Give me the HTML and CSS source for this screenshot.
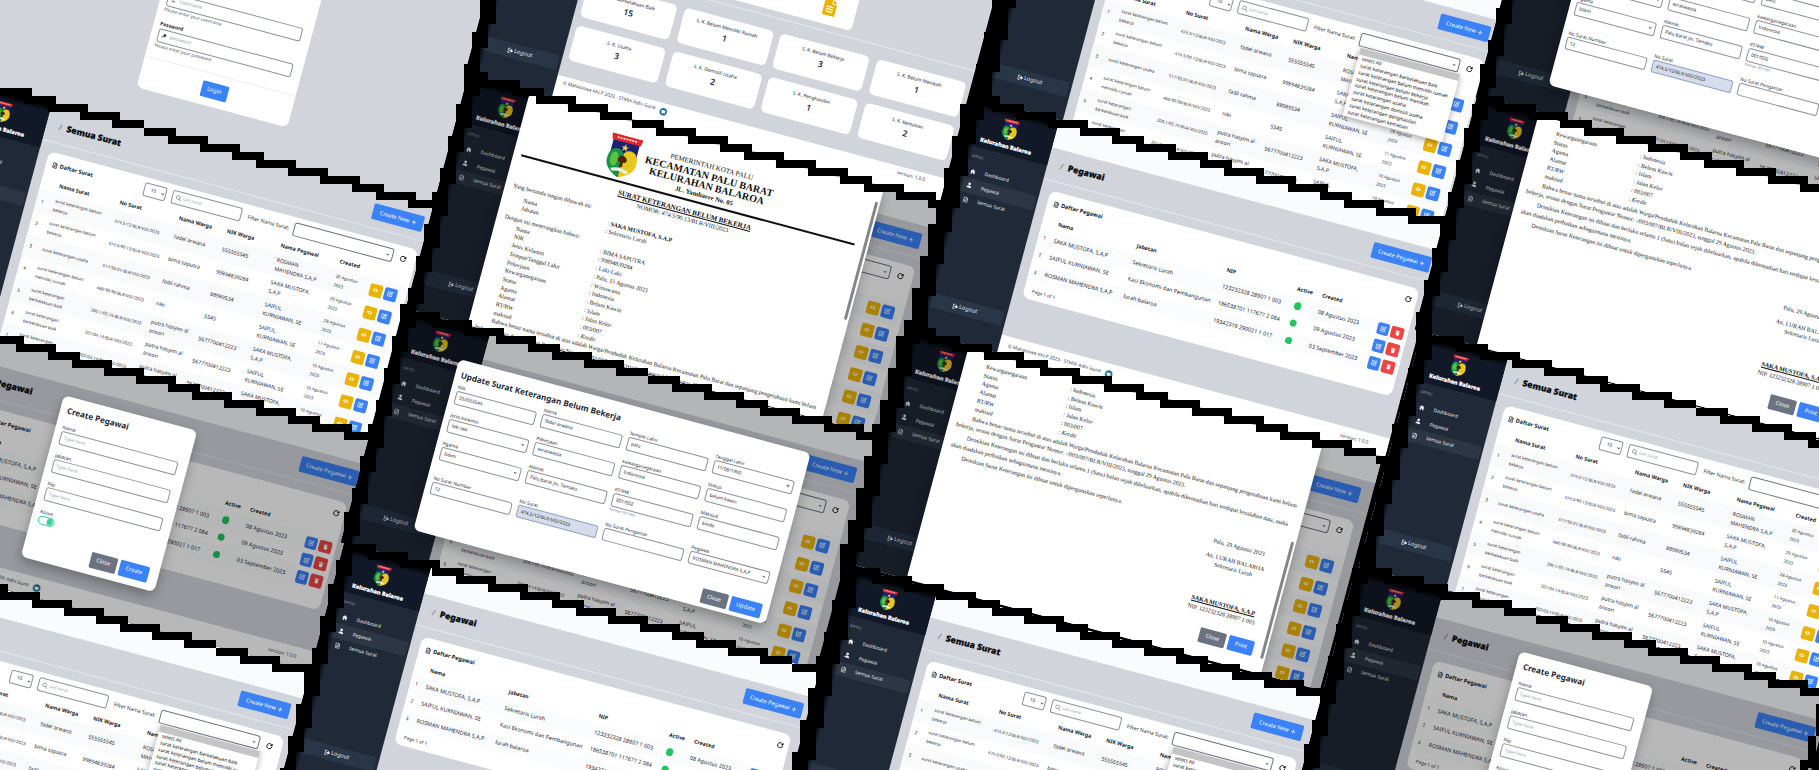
FILE: index.html
```html
<!DOCTYPE html>
<html lang="id">
<head>
<meta charset="utf-8">
<title>Kelurahan Balaroa</title>
<link rel="stylesheet" href="styles.css">
</head>
<body>
<main class="wall" id="wall"></main>
<script src="app.js"></script>
</body>
</html>
```

FILE: styles.css
```css
* { box-sizing: border-box; }
body { margin: 0; background: #000; overflow: hidden; font-family: "Noto Sans", "Open Sans", sans-serif; color: #1f2937; }
.wall { position: relative; width: 1819px; height: 770px; overflow: hidden; background: #000; }
.tile { position: absolute; width: 492px; height: 242px; overflow: hidden; display: flex; transform-origin: 0 0; transform: rotate(15deg) translate(-46px, -22px); background: #d1d5db; font-size: 5px; line-height: 1.2; white-space: nowrap; }
.cells { position: absolute; left: 0; top: 0; width: 1819px; height: 770px; }
svg { display: block; flex: none; }

/* sidebar */
.side { position: relative; flex: none; width: 90px; height: 242px; background: #1f2937; color: #e6e9ed; display: flex; flex-direction: column; }
.side::after { content: ""; position: absolute; inset: 0; background: linear-gradient(90deg, #000 7px, transparent 14px), linear-gradient(180deg, #000 4px, transparent 11px); }
.brand { height: 47px; background: #111827; display: flex; flex-direction: column; align-items: center; padding-top: 12px; }
.brand .emblem { width: 16px; height: 21px; }
.brand b { font-size: 5.5px; font-weight: 900; color: #fff; -webkit-text-stroke: .2px #fff; margin-top: 3px; }
.menu-label { font-size: 4px; color: #8b94a1; padding: 8px 0 0 15px; height: 18px; }
.item { height: 14.3px; margin-right: 2px; padding-left: 17px; display: flex; align-items: center; gap: 9px; font-size: 4.8px; }
.item svg { width: 6px; height: 6px; }
.item.on { background: #2c3644; border-radius: 0 2px 2px 0; }
.logout { position: relative; margin-top: auto; margin-bottom: 28px; margin-right: 3px; height: 15px; background: #283647; display: flex; align-items: center; justify-content: center; gap: 1px; padding-left: 8px; font-size: 5.6px; border-radius: 0 2px 2px 0; }
.logout svg { width: 6px; height: 6px; }

/* page */
.main { flex: 1; height: 242px; display: flex; flex-direction: column; overflow: hidden; }
.topbar { flex: none; height: 28px; background: #fafbfc; }
.scrolled .topbar { height: 6px; background: #d1d5db; }
.head { flex: none; height: 33px; border-bottom: .6px solid #e4e7eb; display: flex; align-items: center; padding: 0 12px 0 13px; }
.head i { font-style: normal; font-size: 8px; color: #6b7280; width: 8px; }
.head b { flex: 1; font-size: 8.6px; font-weight: 900; color: #0b0d12; -webkit-text-stroke: .25px #0b0d12; }
.btn { display: inline-flex; align-items: center; justify-content: center; gap: 2px; height: 15.5px; padding: 0 6.5px; border-radius: 1.5px; background: #3b82f6; color: #fff; font-size: 5.6px; }
.btn.gray { background: #6b7280; }
.head .btn svg { width: 5px; height: 5px; }
.head .btn { width: 60px; padding: 0; margin-right: -6px; }
.head .btn.new { width: 52px; margin-right: 0; }
.card { flex: none; width: 382px; margin: 9px 0 0 10px; background: #fff; border-radius: 7px; }
.surat { height: 260px; }
.pegawai { height: 111px; }
.tools { display: flex; align-items: center; height: 24px; padding-left: 6px; }
.cardtitle { display: flex; align-items: center; gap: 2px; width: 95px; font-weight: 700; font-size: 5.6px; color: #111827; }
.cardtitle svg { width: 6px; height: 7px; }
.pegawai .cardtitle { flex: 1; }
.box { height: 14px; border: .6px solid #8b919b; border-radius: 2.5px; display: flex; align-items: center; justify-content: space-between; padding: 0 3px; font-size: 4.6px; background: #fff; }
.box svg { width: 3px; height: 3px; }
.len { width: 22.5px; padding-left: 6px; padding-right: 1px; }
.find { width: 72px; margin: 0 7px 0 6px; color: #9ca3af; justify-content: flex-start; gap: 2px; font-size: 4.4px; }
.find svg { width: 6px; height: 6px; }
.tools .lbl { width: 47px; font-size: 5.1px; }
.filter { width: 103px; border-color: #6b7280; }
.reload { width: 7px; height: 7px; margin-left: 7px; }
.pegawai .reload { margin-right: 5px; }
.row { display: grid; align-items: center; padding-left: 5px; }
.surat .row { height: 23px; grid-template-columns: 13.5px 62.5px 61.5px 49.7px 55.5px 61.3px 36px 31px; font-size: 5.3px; line-height: 8.8px; }
.surat .row:nth-child(odd) { background: #f9fafb; }
.surat .row.th, .pegawai .row.th { height: 15px; font-weight: 700; font-size: 5.3px; color: #111827; background: #fff; }
.sm { font-size: 4.25px; }
.n { font-size: 4.6px; }
.acts { display: flex; gap: 2.2px; }
.sq { width: 12.8px; height: 12.8px; border-radius: 2px; display: flex; align-items: center; justify-content: center; background: #3b82f6; }
.sq svg { width: 6px; height: 6px; }
.sq.y { background: #eab308; }
.sq.r { background: #ef4444; }
.pegawai .row { height: 17.8px; grid-template-columns: 11px 81.5px 93px 73px 26px 61px 31px; font-size: 5.5px; }
.pegawai .row:nth-child(odd) { background: #fbfcfd; }
.dot { width: 7.4px; height: 7.4px; border-radius: 50%; background: #22c55e; margin-left: 1px; }
.pages { padding: 8px 0 0 8px; font-size: 4.6px; }
.foot { flex: none; margin-top: auto; height: 20px; background: #fff; display: flex; align-items: center; gap: 4px; padding: 0 20px 0 9px; font-size: 4.7px; color: #374151; }
.foot .round { width: 9px; height: 9px; }
.foot span:last-child { margin-left: auto; }

/* dashboard */
.dash .foot { height: 24px; align-items: flex-start; padding-top: 4px; padding-left: 7px; }
.summary { width: 131px; height: 60px; margin: 40px 0 0 141px; background: #fff; border-radius: 5px; display: flex; justify-content: flex-end; align-items: flex-end; padding: 0 20px 9px; }
.summary svg { width: 13px; height: 17px; }
.rule { height: .6px; background: #e6e9ec; margin: 6px 0 13px; }
.stats { display: grid; grid-template-columns: repeat(4, 92px); gap: 8.5px 7.5px; margin-left: 6px; }
.stat { height: 36.5px; background: #fff; border-radius: 5px; display: flex; flex-direction: column; align-items: center; padding-top: 7.5px; font-size: 4.8px; }
.stat strong { font-size: 8.6px; font-weight: 600; line-height: 13px; margin-top: 1px; }

/* login */
.login-card { margin-left: 167px; width: 156px; height: 205px; background: #fff; border-radius: 0 0 6px 6px; display: flex; flex-direction: column; justify-content: flex-end; padding: 0 10.5px 8.5px 6.5px; }
.login-card b { font-size: 5px; margin: 8px 0 2px; }
.login-card .box { height: 14px; justify-content: flex-start; gap: 4px; color: #9ca3af; font-size: 4.8px; }
.login-card .box svg { width: 5px; height: 5px; }
.login-card small { font-size: 4.5px; margin-top: 1px; height: 6px; color: #4b5563; }
.login-card hr { width: 150px; margin: 9px 0 9px -3px; border: 0; height: .5px; background: #eceef0; flex: none; }
.login-card .btn { align-self: center; width: 27px; height: 15.5px; padding: 0; }

/* dropdown menu */
.menu { position: absolute; left: 359px; top: 90px; width: 103px; height: 70px; background: #fff; box-shadow: 0 2px 7px rgba(0,0,0,.35); font-size: 4.9px; line-height: 6.9px; color: #111; }
.menu div { padding-left: 4px; height: 6.9px; }
.menu div:first-child { background: #c4c4c4; }

/* modals */
.shade { position: absolute; inset: 0; background: rgba(0,0,0,.28); }
.modal { position: absolute; background: #fff; border-radius: 6px; box-shadow: 0 5px 12px rgba(0,0,0,.28); }
.modal h3 { margin: 0; font-size: 8.2px; line-height: 12px; font-weight: 700; }
.create { left: 180px; top: 39px; width: 138px; height: 167px; padding: 8px 10px 0 7px; display: flex; flex-direction: column; }
.field { display: flex; flex-direction: column; height: 29px; font-size: 4.7px; line-height: 7px; }
.field .box { height: 13.5px; font-size: 4.7px; flex: none; }
.create .field { padding-top: 7px; }
.create .field .box { color: #9ca3af; }
.create h3 { height: 13px; margin-bottom: 0; }
.toggle { width: 17px; height: 8.5px; border: .6px solid #36d399; border-radius: 5px; display: flex; justify-content: flex-end; align-items: center; padding: 1px; }
.toggle::after { content: ""; width: 6.5px; height: 6.5px; border-radius: 50%; background: #36d399; }
.btns { display: flex; justify-content: flex-end; gap: 3px; }
.create .btns { margin-top: auto; margin-bottom: 7.5px; }
.update { left: 67px; top: 34px; width: 364px; height: 177px; padding: 9px 7px 0 6px; }
.form { display: grid; grid-template-columns: repeat(4, 83px); column-gap: 6px; grid-template-rows: 29px 29px 35.5px 29px; margin-top: 3px; }
.form .field { height: auto; }
.form small { font-size: 3.6px; line-height: 6px; color: #6b7280; }
.off { background: #d5dcea !important; border-color: #8fa1c4; }
.update .btns { margin-top: 11px; }
.doc { left: 64px; top: 3px; width: 367px; height: 240px; border-radius: 4px; font-family: "Liberation Serif", "Times New Roman", serif; color: #111; padding: 0 14px 0 8px; font-size: 5.9px; line-height: 8.7px; overflow: hidden; }
.doc::after { content: ""; position: absolute; right: 2px; top: 14px; width: 2.6px; height: 122px; border-radius: 2px; background: #858585; }
.doc.down::after { top: 103px; height: 121px; }
.letter { display: flex; align-items: flex-start; height: 62px; padding: 15px 0 0 82px; border-bottom: 2.6px solid #111; }
.letter .emblem { width: 33px; height: 43px; }
.letter div { width: 144px; text-align: center; margin-top: 3.5px; font-size: 7.1px; line-height: 9.8px; }
.letter strong { display: block; font-size: 10.1px; }
.letter em { font-style: normal; font-weight: 700; font-size: 6.7px; }
.subj { text-align: center; width: 344px; padding-top: 5.5px; line-height: 8.2px; font-size: 6.1px; margin-bottom: 4px; }
.subj u { display: block; font-weight: 700; font-size: 7px; }
.kv { display: grid; grid-template-columns: 87px 1fr; padding-left: 14px; }
.gap { margin-top: 3px; }
.para { width: 344px; white-space: nowrap; text-align: justify; text-align-last: justify; line-height: 9.4px; }
.para.in { padding-left: 14px; }
.para.end { text-align-last: left; }
.sp { margin-top: 1.6px; }
.sign { width: 76px; margin-left: 267px; text-align: center; }
.sign p { margin: 0; }
.sign p:first-child { margin: 5px 0 6px; }
.sign u { display: block; font-weight: 700; font-size: 6.1px; margin-top: 28px; }
.doc .btns { font-family: "Noto Sans", sans-serif; margin-top: 13px; padding-right: 0; line-height: 1.2; }
.down { padding-top: 9px; }
```

FILE: app.js
```javascript
const svg = (vb, body, cls = '') => `<svg viewBox="0 0 ${vb} ${vb}" class="${cls}">${body}</svg>`;
const line = (d, c = 'currentColor', w = 2) => `<path d="${d}" fill="none" stroke="${c}" stroke-width="${w}" stroke-linecap="round" stroke-linejoin="round"/>`;
const ic = {
  home: svg(24, '<path fill="currentColor" d="M12 2 1 12h3v10h6v-6h4v6h6V12h3z"/>'),
  user: svg(24, '<circle cx="12" cy="7" r="5.5" fill="currentColor"/><path fill="currentColor" d="M2 23c0-6 4-9 10-9s10 3 10 9z"/>'),
  file: svg(24, line('M14 2H5v20h15V8zM14 2v6h6M9 13h7M9 17h5', 'currentColor', 2.4)),
  exit: svg(24, line('M9 3H3v18h6', 'currentColor', 3) + '<path fill="currentColor" d="M8 9h6V4l9 8-9 8v-5H8z"/>'),
  plus: svg(24, line('M12 3v18M3 12h18', '#fff', 3)),
  chev: svg(24, line('M3 7l9 9 9-9', '#111', 5)),
  find: svg(24, line('M16 16l7 7', '#6b7280', 2.5) + '<circle cx="10" cy="10" r="7.5" fill="none" stroke="#6b7280" stroke-width="2.5"/>'),
  key: svg(24, '<circle cx="15" cy="9" r="7" fill="#374151"/><path d="M11 12 2 22" stroke="#374151" stroke-width="4"/>'),
  reload: svg(24, line('M20 8a9 9 0 1 0 1 6', '#111', 3) + '<path d="M22 2v9h-9z" fill="#111"/>', 'reload'),
  eye: svg(24, '<path fill="#fff3c4" d="M1 12C5 3 19 3 23 12 19 21 5 21 1 12z"/><circle cx="12" cy="12" r="3.5" fill="#eab308"/>'),
  edit: svg(24, line('M12 4H3v17h17v-9M9 15l1-4L20 1l3 3-10 10z', '#e8f0ff', 3)),
  bin: svg(24, '<path fill="#fff" d="M3 4h6l1-2h4l1 2h6v3H3zM5 9h14l-1 14H6z"/>'),
  cal: svg(24, line('M3 5h18v17H3zM3 10h18M8 2v5M16 2v5M8 15h8', '#333', 2.5)),
  round: svg(24, '<circle cx="12" cy="12" r="11.5" fill="#9fc7dd"/><circle cx="12" cy="12" r="9" fill="#146a96"/><path fill="#fff" d="M7 8h10v8h-4l-2 2-1-2H7z"/>', 'round'),
  doc: '<svg viewBox="0 0 26 34"><path fill="#eab308" d="M3 0h13v10h10v21a3 3 0 0 1-3 3H3a3 3 0 0 1-3-3V3a3 3 0 0 1 3-3zM18 0l8 8h-8z"/><path d="M6 16h14M6 21h14M6 26h14" stroke="#fff" stroke-width="2.4"/></svg>'
};
// City coat of arms: red banner, navy field with star, green and yellow halves, tree
const emblem = `<svg class="emblem" viewBox="0 0 66 86">
<path fill="#1d2170" d="M6 10h54v30c0 20-8 32-27 44C14 72 6 60 6 40z"/>
<path fill="#159447" d="M20 28C6 28 2 42 3 56c2 14 14 22 29 29V36c-3-5-7-8-12-8z"/>
<path fill="#e8c81e" d="M46 28c14 0 18 14 17 28-2 14-14 22-30 29V36c3-5 7-8 13-8z"/>
<path fill="#5fc23d" d="M17 35c-7 3-9 13-7 21 2 7 7 10 10 8 5-5 8-26-3-29z"/>
<path fill="#4a2410" d="M24 48l4-6 6-2 6 3 3 5-2 5-5 1 1 9h-7l1-9-5-1z"/>
<path fill="#e9f2e2" d="M14 70q19-9 38 0l-5 5q-14-6-28 0z"/>
<path fill="#ffd738" d="M33 16l2 6h6l-5 3 2 6-5-4-5 4 2-6-5-3h6z"/>
<path fill="#e3262b" d="M1 0h64l-3 13H4z"/><path d="M13 6.5h40" stroke="#fff" stroke-width="3" stroke-dasharray="4 2"/></svg>`;

const side = on => `<aside class="side"><div class="brand">${emblem}<b>Kelurahan Balaroa</b></div><div class="menu-label">MENU</div>
${[['home', 'Dashboard'], ['user', 'Pegawai'], ['file', 'Semua Surat']].map(([i, t]) => `<div class="item ${on === t ? 'on' : ''}">${ic[i]}<span>${t}</span></div>`).join('')}
<div class="logout">${ic.exit}Logout</div></aside>`;
const foot = `<div class="foot"><span>© Mahasiswa KKLP 2023 - STMIK Adhi Guna</span>${ic.round}<span>version: 1.0.0</span></div>`;
const head = (t, b, c = '') => `<div class="topbar"></div><div class="head"><i>/</i><b>${t}</b><span class="btn ${c}">${b} ${ic.plus}</span></div>`;
const sel = (t, c = '') => `<div class="box ${c}"><span>${t}</span>${ic.chev}</div>`;

const bb = 'surat keterangan<br>berkelakuan baik', sk = 'SAIFUL<br>KURNIAWAN, SE', sm = 'SAKA MUSTOFA,<br>S,A,P', pu = 'putra hasyim al<br>ansori';
const letters = [
  ['surat keterangan belum<br>bekerja', '474.5/12/BLR/VIII/2023', 'fadel arwana', '555555545', 'ROSMAN<br>MAHENDRA S,A,P', '30'],
  ['surat keterangan belum<br>bekerja', '474.5/90.13/BLR/VIII/2023', 'bima saputra', '99894839284', sm, '29'],
  ['surat keterangan usaha', '517/93.01/BLR/VIII/2023', 'fadil rahma', '88989534', sk, '28'],
  ['surat keterangan belum<br>memiliki rumah', '460/90.90/BLR/VIII/2023', 'niki', '5545', sk, '11'],
  [bb, '200.1/05.74/BLR/VIII/2023', pu, '5677700412223', sm, '10'],
  [bb, '201/04.14/BLR/VIII/2023', pu, '5677700412223', sk, '10'],
  [bb, '202/03.14/BLR/VIII/2023', pu, '5677700412223', sm, '10']
];
const surat = () => side('Semua Surat') + `<section class="main">${head('Semua Surat', 'Create New', 'new')}
<div class="card surat"><div class="tools"><span class="cardtitle">${ic.file}Daftar Surat</span>${sel('10', 'len')}<div class="box find">${ic.find}cari surat</div><span class="lbl">Filter Nama Surat:</span>${sel('', 'filter')}${ic.reload}</div>
<div class="row th"><span></span><span>Nama Surat</span><span>No Surat</span><span>Nama Warga</span><span>NIK Warga</span><span>Nama Pegawai</span><span>Created</span></div>
${letters.map((r, i) => `<div class="row"><span class="n">${i + 1}</span><span class="sm">${r[0]}</span><span class="sm">${r[1]}</span><span>${r[2]}</span><span>${r[3]}</span><span>${r[4]}</span><span class="sm">${r[5]} Agustus<br>2023</span><span class="acts"><i class="sq y">${ic.eye}</i><i class="sq">${ic.edit}</i></span></div>`).join('')}
</div></section>`;

const staff = [
  ['SAKA MUSTOFA, S,A,P', 'Sekretaris Lurah', '123232328 28907 1 003', '08 Agustus 2023'],
  ['SAIFUL KURNIAWAN, SE', 'Kasi Ekonomi dan Pembangunan', '186538701 117677 2 084', '09 Agustus 2023'],
  ['ROSMAN MAHENDRA S,A,P', 'lurah balaroa', '19342319 290021 1 017', '03 September 2023']
];
const pegawai = () => side('Pegawai') + `<section class="main">${head('Pegawai', 'Create Pegawai')}
<div class="card pegawai"><div class="tools"><span class="cardtitle">${ic.file}Daftar Pegawai</span>${ic.reload}</div>
<div class="row th"><span></span><span>Nama</span><span>Jabatan</span><span>NIP</span><span>Active</span><span>Created</span></div>
${staff.map((r, i) => `<div class="row"><span class="n">${i + 1}</span><span>${r[0]}</span><span>${r[1]}</span><span>${r[2]}</span><i class="dot"></i><span>${r[3]}</span><span class="acts"><i class="sq">${ic.edit}</i><i class="sq r">${ic.bin}</i></span></div>`).join('')}
<div class="pages">Page 1 of 1</div></div>${foot}</section>`;

const kinds = ['', 'select All', ...['berkelakuan baik', 'belum memiliki rumah', 'belum bekerja', 'belum menikah', 'usaha', 'domisili usaha', 'penghasilan', 'kematian'].map(k => 'surat keterangan ' + k)];
const dropdown = () => surat() + `<div class="menu">${kinds.map(k => `<div>${k}</div>`).join('')}</div>`;

const dashboard = () => side('') + `<section class="main dash"><div class="summary">${ic.doc}</div><div class="rule"></div><div class="stats">
${[['S. K. Berkelakuan Baik', 15], ['S. K. Belum Memiliki Rumah', 1], ['S. K. Belum Bekerja', 3], ['S. K. Belum Menikah', 1], ['S. K. Usaha', 3], ['S. K. Domisili Usaha', 2], ['S. K. Penghasilan', 1], ['S. K. Kematian', 2]].map(s => `<div class="stat">${s[0]}<strong>${s[1]}</strong></div>`).join('')}
</div>${foot}</section>`;

const login = () => `<div class="login-card"><div class="box">${ic.user}Username</div><small>Please enter your username</small><b>Password</b><div class="box">${ic.key}password</div><small>Please enter your password</small><hr><span class="btn">Login</span></div>`;

const field = (l, v, c = '', extra = '', hint = '') => `<div class="field">${l}<div class="box ${c}"><span>${v}</span>${extra}</div>${hint}</div>`;
const create = () => pegawai() + `<div class="shade"></div><div class="modal create"><h3>Create Pegawai</h3>${['Nama', 'Jabatan', 'Nip'].map(l => field(l, 'Type here')).join('')}<div class="field">Active<div class="toggle"></div></div><div class="btns"><span class="btn gray">Close</span><span class="btn">Create</span></div></div>`;
const update = () => surat() + `<div class="shade"></div><div class="modal update"><h3>Update Surat Keterangan Belum Bekerja</h3><div class="form">
${field('NIK', '555555545')}${field('Nama', 'fadel arwana')}${field('Tempat Lahir', 'palu')}${field('Tanggal Lahir', '11/08/1990', '', ic.cal)}
${field('Jenis Kelamin', 'laki-laki', '', ic.chev)}${field('Pekerjaan', 'wiraswasta')}${field('Kewarganegaraan', 'Indonesia')}${field('Status', 'belum kawin')}
${field('Agama', 'Islam', '', ic.chev)}${field('Alamat', 'Palu Barat jln. Tamako')}${field('RT/RW', '001/002', '', '', '<small>format: 001/001</small>')}${field('Maksud', 'kredit')}
${field('No Surat Number', '12')}${field('No Surat', '474.5/12/BLR/VIII/2023', 'off')}${field('No Surat Pengantar', '-')}${field('Pegawai', 'ROSMAN MAHENDRA S,A,P', '', ic.chev)}
</div><div class="btns"><span class="btn gray">Close</span><span class="btn">Update</span></div></div>`;

const kv = (rows, c = '') => `<div class="kv ${c}">${rows.map(r => `<span>${r[0]}</span><span>: ${r[1]}</span>`).join('')}</div>`;
const person = [['Nama', 'BIMA SAPUTRA'], ['NIK', '99894839284'], ['Jenis Kelamin', 'Laki-Laki'], ['Tempat/Tanggal Lahir', 'Palu, 15 Agustus 2023'], ['Pekerjaan', 'Wiraswasta'], ['Kewarganegaraan', 'Indonesia'], ['Status', 'Belum Kawin'], ['Agama', 'Islam'], ['Alamat', 'Jalan Kelor'], ['RT/RW', '003/007'], ['maksud', '<i>Kredit</i>']];
const body = `<div class="para in">Bahwa benar nama tersebut di atas adalah Warga/Penduduk Kelurahan Balaroa Kecamatan Palu Barat dan sepanjang pengetahuan kami belum</div><div class="para end">bekerja, sesuai dengan Surat Pengantar Nomor: -/003/007/BLR/VIII/2023, tanggal 29 Agustus 2023.</div>
<div class="para in sp">Demikian Keterangan ini dibuat dan berlaku selama 1 (Satu) bulan sejak dikeluarkan, apabila dikemudian hari terdapat kesalahan data, maka</div><div class="para end">akan diadakan perbaikan sebagaimana mestinya.</div>
<div class="para in end sp">Demikian Surat Keterangan ini dibuat untuk dipergunakan seperlunya.</div>`;
const letterTop = () => surat() + `<div class="shade"></div><div class="modal doc"><div class="letter">${emblem}<div>PEMERINTAH KOTA PALU<strong>KECAMATAN PALU BARAT</strong><strong>KELURAHAN BALAROA</strong><em>JL. Yambaere No. 05</em></div></div>
<div class="subj"><u>SURAT KETERANGAN BELUM BEKERJA</u>NOMOR: 474.5/90.13/BLR/VIII/2023</div>Yang bertanda tangan dibawah ini:
${kv([['Nama', '<b>SAKA MUSTOFA, S.A.P</b>'], ['Jabatan', 'Sekretaris Lurah']], 'gap')}<div class="gap">Dengan ini menerangkan bahwa:</div>${kv(person)}${body}</div>`;
const letterEnd = () => surat() + `<div class="shade"></div><div class="modal doc down">${kv(person.slice(5))}<div class="sp"></div>${body}
<div class="sign"><p>Palu, 29 Agustus 2023</p><p>An. LURAH BALAROA</p><p>Sekretaris Lurah</p><u>SAKA MUSTOFA, S.A.P</u>NIP. 123232328 28907 1 003</div><div class="btns"><span class="btn gray">Close</span><span class="btn">Print</span></div></div>`;

// Each entry: position of the emblem's centre, screen, extra class, left margin width
const tiles = [
  [67, -121, login], [4.3, 111.8, surat, 'scrolled'], [-61.5, 343.5, create], [-124, 578, dropdown],
  [565.5, -126, dashboard], [507, 107.8, letterTop], [442, 342, update], [382.5, 575.5, pegawai],
  [1076, -99, dropdown, '', 52], [1010.7, 130, pegawai, '', 52], [946, 362, letterEnd, '', 52], [888.5, 599.8, dropdown, '', 52],
  [1577, -103, update], [1516, 129, letterEnd], [1460, 366, surat, 'scrolled'], [1395, 599.5, create, 'last']
];
const wall = document.getElementById('wall');
wall.innerHTML = tiles.map(([x, y, f, c = '']) => `<div class="tile ${c}" style="left:${x}px;top:${y}px">${f()}</div>`).join('');

// Stepped dividers on an 8px cell grid
const A = 15 * Math.PI / 180, C = Math.cos(A), S = Math.sin(A), cells = new Set();
const mark = (t, u, v) => cells.add(Math.floor((t[0] + u * C - v * S) / 8) + ',' + Math.floor((t[1] + u * S + v * C) / 8));
for (const t of tiles) {
  const m = t[4] || 47;
  for (let u = -m + 5; u < 443; u += .5) mark(t, u, -20.5);
  for (let v = -20; v < 221; v += .5) {
    for (let u = -m + 6; u <= -38; u += 1) mark(t, u, v);
    if (t[3] === 'last') mark(t, 442, v);
  }
}
const d = [...cells].map(k => { const [i, j] = k.split(','); return `M${i * 8} ${j * 8}h8v8h-8z`; }).join('');
wall.insertAdjacentHTML('beforeend', `<svg class="cells" viewBox="0 0 1819 770" shape-rendering="crispEdges"><path d="${d}"/></svg>`);
```
